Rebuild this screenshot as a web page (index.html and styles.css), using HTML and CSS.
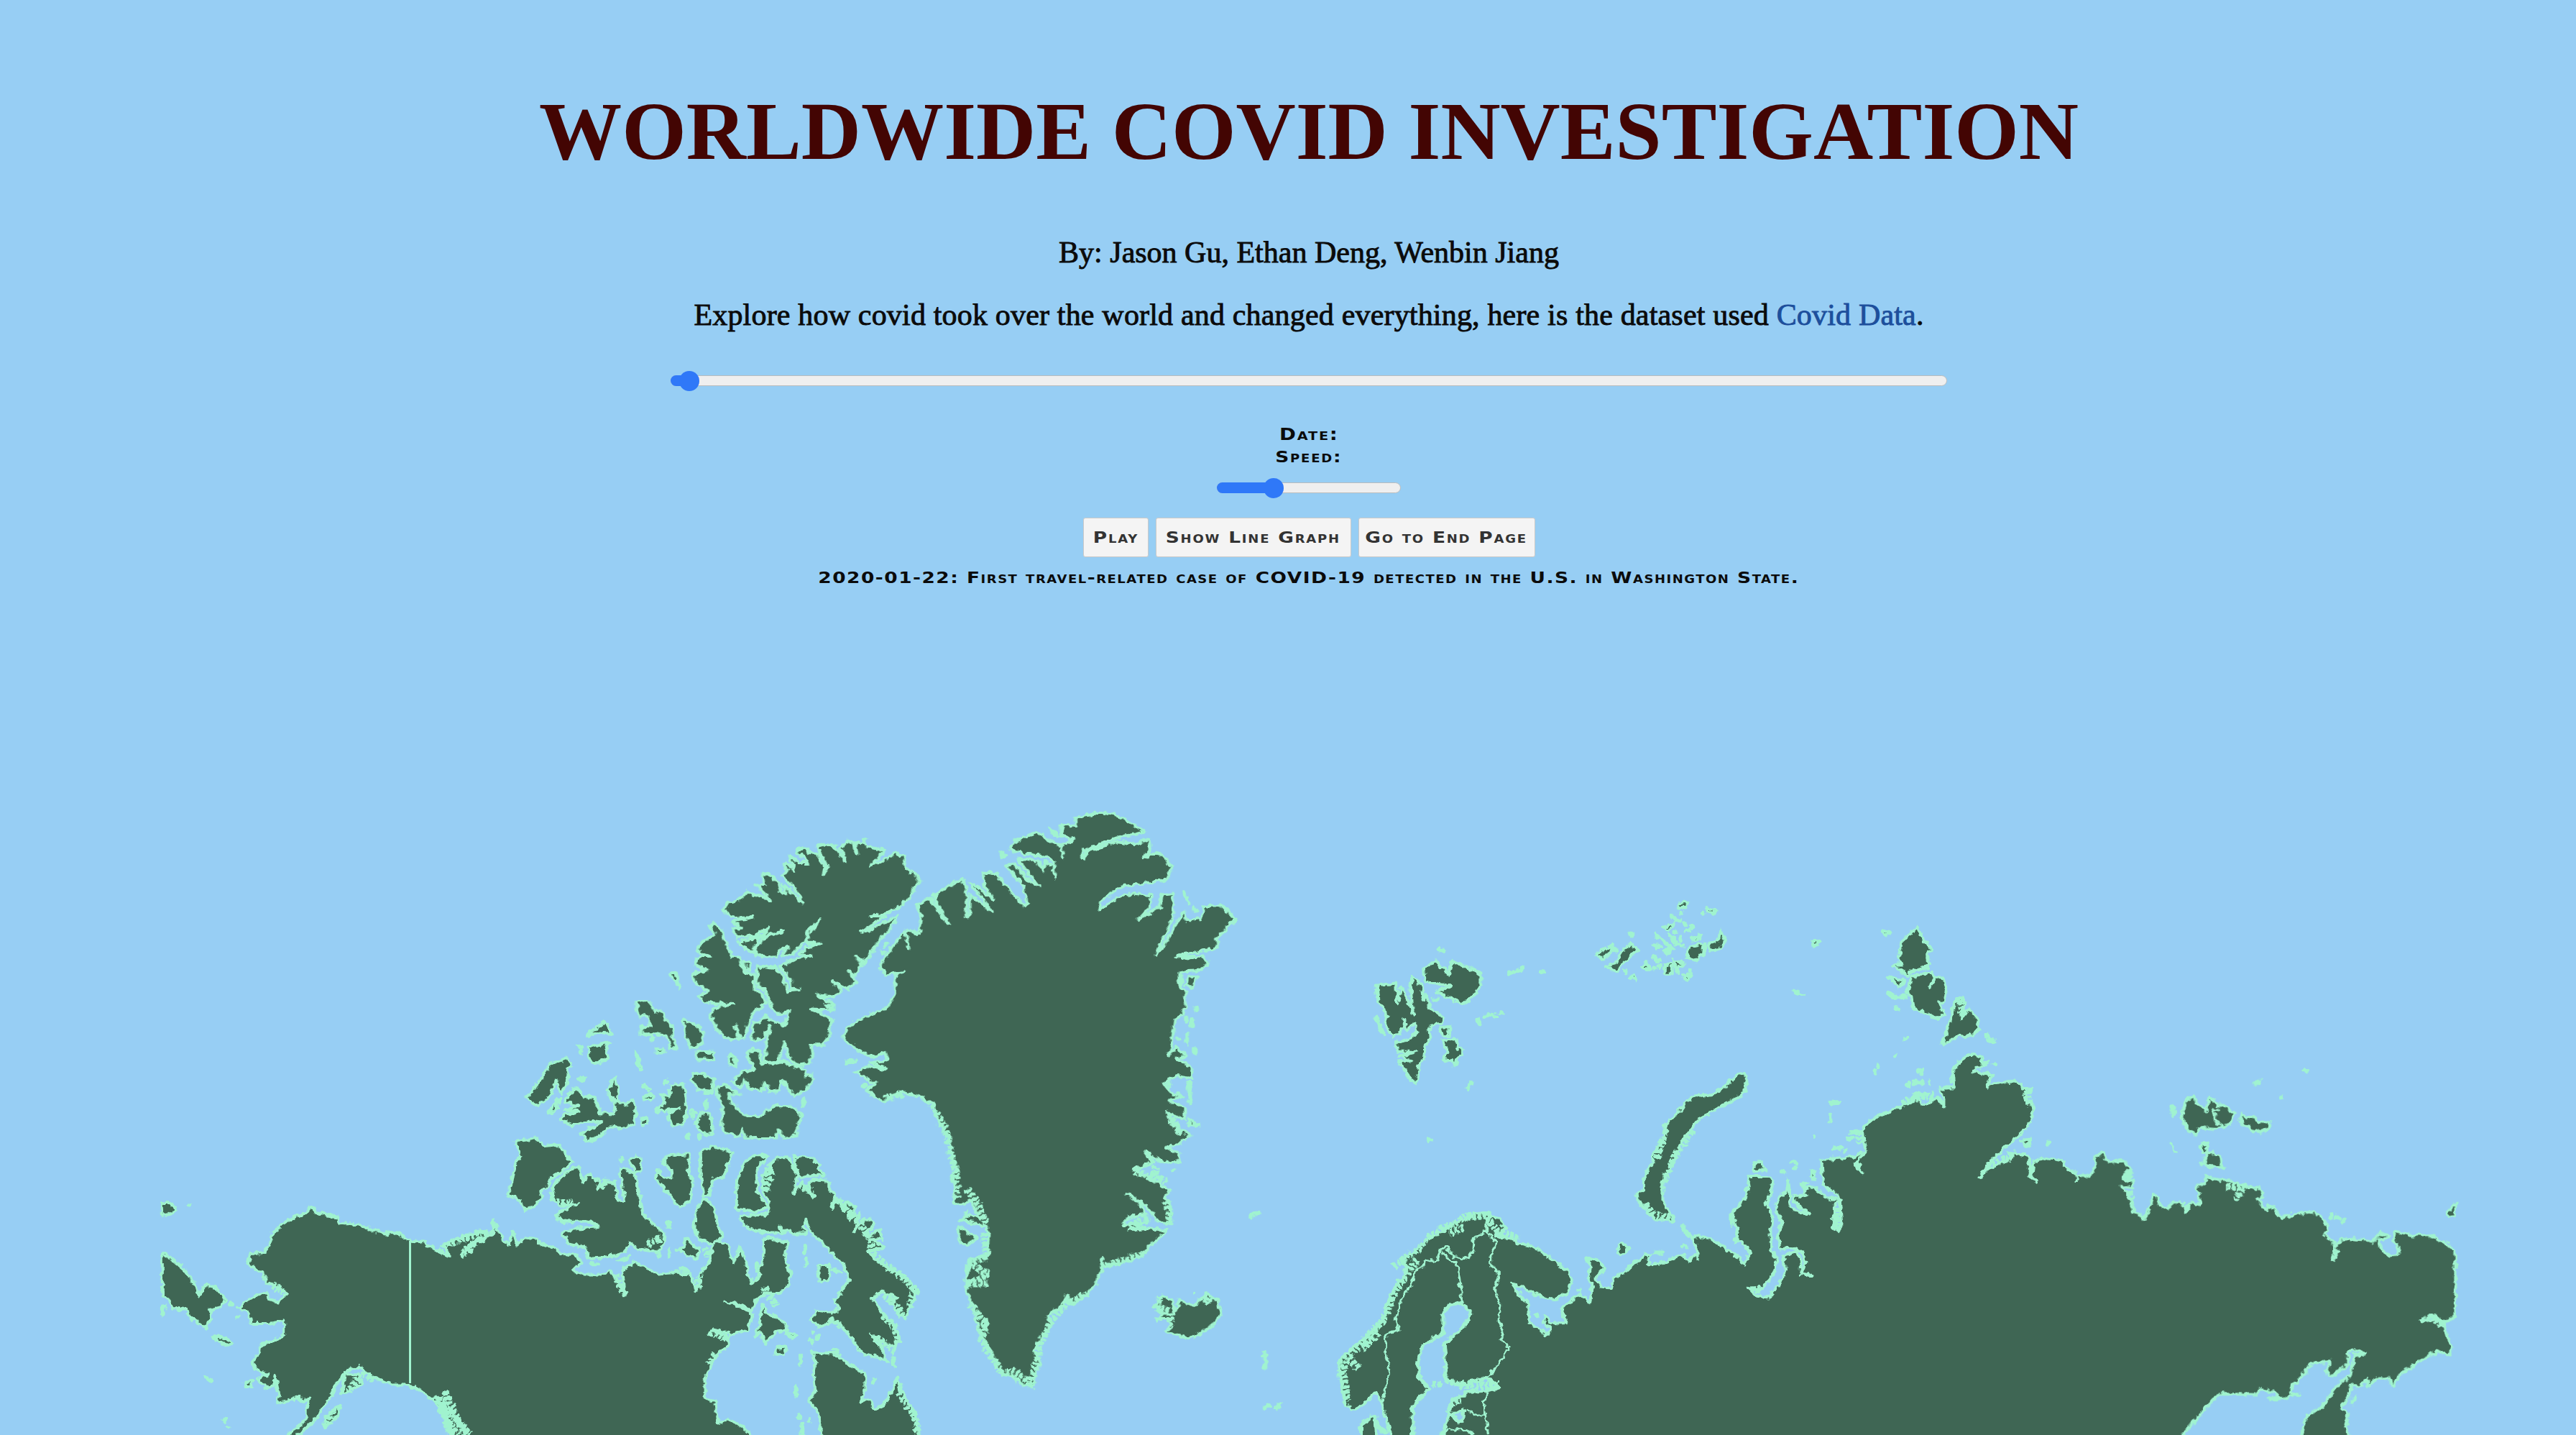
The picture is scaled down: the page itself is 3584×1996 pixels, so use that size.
FILE: index.html
```html
<!DOCTYPE html>
<html lang="en">
<head>
<meta charset="utf-8">
<title>Worldwide Covid Investigation</title>
<link rel="stylesheet" href="styles.css">
</head>
<body>
<header class="intro">
  <h1 class="title">WORLDWIDE COVID INVESTIGATION</h1>
  <p class="byline">By: Jason Gu, Ethan Deng, Wenbin Jiang</p>
  <p class="lead">Explore how covid took over the world and changed everything, here is the dataset used <a class="link" href="#">Covid Data</a>.</p>
</header>
<section class="controls">
  <div class="slider slider-date"><span class="fill"></span><span class="thumb"></span></div>
  <div class="label wide">Date:</div>
  <div class="label label-speed wide">Speed:</div>
  <div class="slider slider-speed"><span class="fill"></span><span class="thumb"></span></div>
  <div class="buttons">
    <button class="btn btn-play"><span class="wide">Play</span></button>
    <button class="btn btn-graph"><span class="wide">Show Line Graph</span></button>
    <button class="btn btn-end"><span class="wide">Go to End Page</span></button>
  </div>
  <p class="event wide">2020-01-22: First travel-related case of COVID-19 detected in the U.S. in Washington State.</p>
</section>
<main class="map-wrap">
<svg class="map" viewBox="225 1000 3192 996">
  <defs>
    <filter id="rough" filterUnits="userSpaceOnUse" x="200" y="1000" width="3250" height="1010" color-interpolation-filters="sRGB">
      <feTurbulence type="fractalNoise" baseFrequency="0.13" numOctaves="2" seed="4" result="n"/>
      <feDisplacementMap in="SourceGraphic" in2="n" scale="9" xChannelSelector="R" yChannelSelector="G"/>
    </filter>
  </defs>
  <g filter="url(#rough)">
  <!-- Alaska and western Canada -->
  <g class="land" transform="translate(200 1400) scale(.57398 .3801)">
    <path d="M345 1590 345 1568 375 1540 395 1505 395 1465 403 1430 385 1445 375 1430 350 1442 322 1450 328 1420 318 1355 315 1390 295 1395 275 1365 300 1345 272 1330 262 1300 278 1270 285 1235 315 1222 340 1208 340 1145 325 1155 300 1160 262 1160 250 1120 230 1100 265 1062 295 1045 300 1070 325 1080 350 1050 310 1015 297 1010 290 980 252 937 258 905 285 903 302 880 312 830 330 805 365 768 395 755 405 732 420 755 450 765 470 770 475 795 520 795 550 817 585 830 612 824 640 855 680 862 705 890 738 915 730 870 760 850 800 830 830 820 828 850 790 880 770 912 800 860 850 825 845 785 858 815 870 850 885 872 895 820 905 870 925 845 950 850 970 875 990 880 1020 905 1050 910 1060 935 1040 965 1060 980 1110 980 1130 965 1150 1010 1167 1058 1160 960 1190 935 1220 960 1250 980 1290 972 1325 980 1340 1040 1355 960 1370 940 1380 870 1390 855 1415 870 1430 940 1445 880 1460 935 1465 980 1475 1015 1490 990 1500 930 1505 845 1530 850 1560 865 1555 920 1568 980 1560 1025 1540 1050 1505 1050 1485 1075 1475 1112 1450 1095 1410 1082 1440 1090 1475 1125 1465 1180 1430 1200 1375 1180 1420 1220 1415 1245 1390 1270 1375 1310 1360 1370 1360 1435 1383 1445 1392 1525 1418 1512 1450 1535 1470 1568 1480 1600 755 1600 745 1568 720 1480 700 1440 665 1400 640 1385 600 1385 550 1350 520 1318 490 1335 465 1385 448 1440 410 1520 375 1568 365 1600Z"/>
    <path d="M45 900 60 915 100 965 125 1020 130 1060 150 1020 170 1025 200 1075 185 1100 160 1110 165 1140 150 1175 110 1135 105 1110 70 1105 55 1060 45 1060ZM45 1095 52 1095 45 1130ZM45 718 62 718 80 742 65 760 45 765ZM170 1205 200 1215 215 1235 205 1240 175 1222ZM245 1375 262 1370 262 1392 248 1392ZM485 1345 520 1345 530 1380 505 1400 480 1420ZM440 1500 475 1460 470 1500 440 1540Z"/>
    <path d="M900 495 948 482 975 510 1005 505 1040 570 985 635 978 665 968 665 960 715 922 750 912 710 882 688 893 640 900 580 912 545Z"/>
    <path d="M1055 582 1062 640 1080 612 1105 640 1100 670 1120 640 1143 648 1150 712 1165 712 1158 640 1155 590 1190 610 1200 680 1210 760 1230 790 1260 825 1262 870 1245 900 1195 885 1178 865 1165 900 1130 915 1078 925 1070 880 1030 870 1012 825 1050 812 1102 805 1085 785 1050 785 1010 790 998 760 1050 720 1010 730 988 705 992 660 1020 610Z"/>
    <path d="M1175 560 1195 548 1207 560 1205 600 1195 610ZM985 210 1025 190 1040 215 1025 225 1030 280 1010 318 1000 270 985 330 955 365 925 335 945 305ZM1075 105 1118 52 1135 100 1100 95ZM1078 150 1128 130 1120 150 1125 190 1095 208 1080 195ZM1050 140 1065 150 1062 170ZM1190 165 1210 230 1200 225ZM980 385 1008 335 995 388ZM1052 264 1070 262 1066 272Z"/>
    <path d="M1020 350 1040 300 1060 310 1065 330 1090 330 1108 390 1140 393 1143 350 1122 310 1142 262 1150 300 1148 345 1165 360 1185 345 1193 370 1188 430 1160 445 1130 440 1100 480 1075 490 1058 465 1110 425 1080 420 1040 435 1010 415 1020 395 1055 385 1020 378 1055 365Z"/>
    <path d="M1275 290 1310 285 1315 340 1315 400 1305 435 1280 435 1270 390 1300 372 1240 385 1262 350 1255 320 1275 330ZM1210 285 1230 305 1222 312ZM1212 325 1235 325 1230 340 1215 338ZM1205 410 1220 405 1220 430 1208 432ZM1330 245 1355 245 1382 265 1378 310 1345 305 1330 270ZM1355 385 1375 400 1380 465 1360 468 1335 430ZM1270 545 1322 540 1320 600 1332 640 1325 710 1300 738 1270 680 1240 630 1245 600 1262 630 1280 625 1278 595 1258 570ZM1350 530 1380 512 1428 532 1405 628 1380 630 1370 690 1358 690 1350 620ZM1360 700 1385 740 1390 800 1405 840 1380 870 1350 855 1335 820 1338 740ZM1480 545 1512 545 1485 600 1488 680 1512 735 1480 752 1437 740 1437 640 1455 570ZM1312 845 1345 890 1340 925 1290 890 1310 880ZM1150 930 1180 910 1165 930Z"/>
    <path class="fringe" d="M705 1425 725 1480 745 1568M730 1410 750 1480 780 1568M715 1430 740 1520 760 1568M725 1450 790 1568M530 1340 560 1370M520 1360 495 1410M455 1480 445 1530M340 1045 310 1015M720 900 735 870 820 825M775 905 800 865M1220 870 1255 850M1145 980 1160 1050M1000 715 1040 722M1105 660 1125 635M1370 1190 1420 1215M1385 1270 1370 1310M1500 1030 1530 1090M1345 1030 1345 990M1360 880 1370 920"/>
    <path class="specks" d="M108 730h2M212 1090h2M228 1136h2M150 1358l12 14M195 1515h2M203 1538h2M1272 785v20M1250 900v16M1273 890v24M1300 960l20 6M1085 940h14M1318 475v6M1347 475v5M1330 380v22M1362 350v14M1270 272l-8 12"/>
  </g>
  <!-- Ellesmere, Devon and the Queen Elizabeth Islands -->
  <g class="land" transform="translate(680 1130) scale(.40816 .33333)">
    <path d="M800 410 815 380 860 360 880 330 905 345 935 350 960 372 945 345 910 305 940 300 935 255 955 258 985 290 995 330 1015 340 1000 300 1040 340 1070 382 1060 345 1002 265 1020 240 1005 225 1015 210 1040 240 1025 180 1060 210 1090 210 1050 160 1070 150 1100 170 1120 170 1140 220 1158 225 1140 260 1150 215 1118 140 1150 132 1185 145 1200 180 1218 205 1200 150 1220 122 1240 122 1255 170 1250 130 1280 118 1290 145 1350 158 1305 220 1340 205 1385 165 1415 185 1420 235 1455 255 1468 285 1445 325 1430 360 1400 395 1350 425 1300 432 1350 432 1270 500 1300 490 1395 430 1385 460 1330 540 1280 630 1255 600 1270 640 1250 680 1225 660 1255 710 1225 735 1170 705 1205 740 1175 770 1120 760 1175 800 1175 825 1095 820 1130 835 1175 870 1160 895 1165 930 1140 970 1100 970 1105 1010 1090 1050 1050 1055 1020 1020 1010 960 985 1040 940 1045 945 980 958 890 930 950 895 950 900 885 945 852 1005 890 1025 830 985 840 965 815 955 780 940 740 917 728 915 680 915 640 980 648 1005 690 1020 745 1060 740 1030 735 1028 700 990 640 1050 610 1100 598 1060 590 1080 565 1135 545 1085 545 1085 510 1128 450 1090 490 1075 540 1040 590 1000 600 1018 560 985 580 980 600 940 605 905 590 930 530 1005 495 920 520 900 585 870 565 850 540 930 520 955 478 925 500 910 515 845 522 835 480 860 485 830 455 900 438 860 440 825 430Z"/>
    <path d="M750 475 765 462 795 490 805 535 828 598 855 605 862 640 872 668 905 680 905 740 935 765 948 795 905 830 885 880 870 945 858 945 840 890 850 945 800 938 775 900 752 838 780 812 832 798 740 795 715 770 745 742 702 712 697 672 745 660 700 632 722 600 755 600 710 578 725 540 772 510ZM870 625 888 625 888 660 875 655Z"/>
    <path d="M905 1072 880 1010 900 985 925 1000 930 1045 970 1050 1005 1035 1020 1050 1075 1070 1080 1100 1100 1090 1105 1120 1080 1160 1040 1185 1020 1155 1000 1115 990 1160 960 1165 940 1130 930 1165 900 1150 890 1160 870 1115 860 1150 830 1125 860 1085ZM775 1150 800 1132 855 1178 815 1175 830 1210 855 1250 880 1265 920 1270 970 1225 1020 1225 1055 1245 1070 1275 1052 1300 1050 1350 1010 1360 985 1325 980 1358 875 1360 865 1325 850 1355 800 1330 792 1280 800 1240 785 1190Z"/>
    <path d="M620 670 640 668 650 735 638 705 622 695ZM505 790 545 785 565 830 585 825 610 870 628 900 630 940 642 985 620 985 608 935 575 925 520 925 518 895 550 895 540 850 515 850 505 830ZM662 862 690 875 732 915 725 970 690 985 668 930ZM708 1000 768 998 765 1032 708 1030ZM815 1015 838 1020 845 1060 822 1055ZM570 988 590 985 598 1000 575 1003ZM1150 805 1172 805 1175 825Z"/>
    <path class="specks" d="M555 935v12M450 1448h3M740 1205v22M1072 1200v20M1352 555h2M690 1260l14-6M675 1355l6-6M718 1352h3M735 1170h22"/>
  </g>
  <!-- Baffin Island and northern Quebec -->
  <g class="land" transform="translate(960 1560) scale(.44643 .33333)">
    <path d="M325 145 385 155 400 180 418 228 380 222 345 235 328 190ZM245 180 285 148 308 148 320 190 335 215 325 300 350 250 385 320 370 260 385 240 425 245 435 260 435 290 455 300 440 360 460 320 480 370 490 335 515 355 495 410 530 385 510 460 545 405 570 410 572 435 540 480 590 455 597 490 560 490 605 525 555 540 580 580 620 610 660 640 710 705 700 740 685 775 670 820 640 790 620 750 645 735 600 710 565 735 600 800 635 850 655 915 635 940 600 920 565 890 600 950 615 1000 560 975 525 955 505 905 470 850 440 830 425 850 400 855 375 830 395 790 430 800 465 782 450 742 475 700 495 660 480 600 450 560 430 530 390 480 375 455 360 410 350 435 365 468 330 470 275 440 300 465 220 462 170 435 155 392 200 392 245 385 245 330 225 290 228 230 240 200 262 220Z"/>
    <path d="M400 600 435 600 435 660 400 665ZM225 760 240 800 290 830 305 870 265 880 235 925 220 880 200 895 215 860ZM300 880 330 890 318 905ZM270 945 300 940 290 975 265 970ZM345 970 350 1000 340 1015ZM370 908 385 918 380 928ZM570 1075 576 1075 572 1090ZM445 615 470 625 450 628ZM630 1000 640 1025 632 1015Z"/>
    <path d="M380 960 460 970 490 1010 545 1050 545 1130 530 1170 560 1160 575 1200 610 1175 625 1130 645 1070 660 1130 700 1215 715 1308 720 1340 410 1340 408 1308 405 1225 370 1165 390 1120 385 1050 390 1010Z"/>
    <path class="specks" d="M362 575v20M358 520v25M383 878h2M398 900v8M330 1110l-4 35M343 1230v6M372 1242v6M350 1265v40M635 985v20M450 950l8 8M208 595v30"/>
    <path class="fringe" d="M450 315 490 370 530 420 560 490 570 550 620 610 660 645 700 700 685 770M605 725 645 770 660 810M580 900 640 960M600 810 640 860 645 930M435 825 470 850M340 260 375 290M240 190 245 240 235 290M650 1130 700 1230 712 1300M235 690 270 770"/>
  </g>
  <!-- Greenland and Iceland -->
  <g class="land" transform="translate(1160 1100) scale(.39541 .54847)">
    <path d="M35 630 45 600 120 570 190 548 215 515 215 470 240 458 185 468 160 445 175 430 205 395 250 355 265 400 252 355 265 352 300 365 308 325 295 290 340 270 380 318 405 338 350 265 400 245 450 222 468 250 468 320 480 315 480 265 555 305 480 235 500 240 562 275 530 240 525 205 575 212 610 245 670 292 680 285 665 240 605 190 635 185 690 230 720 240 690 215 645 172 720 178 738 205 740 178 775 190 778 220 775 180 750 168 640 155 620 145 640 125 715 105 770 130 800 140 805 170 800 138 845 125 800 115 803 85 850 90 850 68 940 55 1000 62 1095 102 985 122 875 152 875 172 890 154 1000 128 1060 135 1110 122 1112 155 1090 168 1130 158 1150 160 1192 192 1170 225 1000 245 935 285 940 302 1000 270 1050 260 1120 265 1115 292 1072 325 1148 292 1152 265 1195 258 1195 320 1135 415 1160 395 1232 305 1240 330 1290 325 1305 292 1365 290 1413 325 1345 375 1350 398 1285 408 1205 420 1230 422 1300 420 1315 435 1290 455 1215 460 1215 495 1235 505 1240 545 1225 570 1200 580 1190 640 1180 670 1205 650 1240 672 1205 680 1258 700 1258 728 1210 722 1160 740 1185 765 1225 775 1180 785 1235 805 1235 835 1170 815 1215 860 1255 870 1215 895 1170 905 1215 920 1212 942 1180 945 1125 930 1095 915 1125 945 1050 960 1120 985 1185 1015 1165 1030 1185 1055 1187 1100 1135 1090 1110 1060 1030 1020 1080 1050 1100 1075 1040 1080 1015 1100 1100 1095 1035 1115 1100 1108 1175 1115 1110 1155 1085 1180 1000 1200 955 1208 940 1185 945 1215 920 1250 895 1275 840 1305 820 1280 800 1310 750 1330 765 1355 740 1380 705 1420 725 1445 710 1480 705 1510 670 1510 630 1485 595 1480 550 1420 515 1380 500 1345 495 1310 470 1280 465 1240 475 1190 510 1185 540 1180 545 1120 540 1105 445 1088 480 1075 515 1085 480 1040 440 1050 420 1040 425 1010 415 980 430 960 415 920 405 880 385 860 362 830 355 800 300 775 245 765 200 775 180 790 115 760 145 742 75 712 120 700 188 706 130 690 188 682 180 665 130 675 80 655Z"/>
    <path d="M440 1105 505 1135 470 1155 440 1140ZM1125 1310 1155 1280 1190 1290 1200 1325 1215 1292 1270 1305 1310 1275 1350 1290 1365 1325 1330 1360 1250 1390 1165 1372 1190 1355 1170 1340 1135 1340 1165 1325ZM588 155 605 165 590 168ZM1232 255 1250 285 1238 275ZM1265 295 1280 305 1272 306ZM1245 470 1280 470 1262 500 1240 492ZM1250 830 1272 845 1250 850ZM760 95 790 115 770 108ZM1305 1287 1330 1290 1310 1300Z"/>
    <path class="specks" d="M1275 550v6M1262 580l-4 18M1240 575v8M1242 615v25M1270 655v10M1210 628h2M1250 740l4 50M1192 962h2M1280 848h3M170 410h5M183 392h2M45 688l30-2M105 748h8M1467 1080l26-12M1510 1435l16 0M1518 1425v38M1268 1272h1M1512 1566l18-6M1555 1566l12-8M465 1068v4M1222 470v20M1215 850v15"/>
    <path class="fringe" d="M345 795 370 830 400 870 412 920 430 970 435 1030M470 1010 510 1050 535 1100M530 1120 540 1180 480 1200 540 1225 480 1250 540 1250M480 1300 510 1330 540 1360 520 1390 550 1430 590 1475 640 1475 690 1500 715 1450 720 1410 760 1350 820 1300 890 1275M960 1203 1090 1175M1150 1280 1140 1310 1180 1320 1190 1350M1175 1040 1180 1095M180 780 250 768M510 1370 540 1345M1060 965 1170 990M1120 940 1140 990M1040 1100 1110 1085M1180 820 1220 870M1170 740h20"/>
  </g>
  <!-- Scandinavia, Svalbard, Novaya Zemlya, western Russia -->
  <g class="land" transform="translate(1840 1240) scale(.40816 .48214)">
    <path d="M1278 1040 1250 1068 1230 1045 1190 1060 1145 1075 1110 1075 1115 1045 1070 1065 1020 1105 990 1115 985 1145 950 1140 930 1115 962 1090 945 1065 895 1058 915 1075 908 1120 920 1130 912 1185 880 1160 840 1185 815 1205 832 1245 780 1245 760 1225 750 1240 780 1265 765 1278 705 1245 700 1185 670 1165 645 1130 690 1145 740 1168 790 1178 830 1160 850 1130 840 1100 790 1065 720 1025 670 1015 640 1000 590 995 625 970 600 945 560 930 520 930 490 945 440 960 400 985 350 1010 310 1040 270 1060 290 1090 250 1140 220 1190 210 1230 160 1280 110 1310 60 1350 55 1390 70 1440 75 1475 105 1495 140 1480 180 1445 200 1470 215 1520 232 1568 232 1595 1278 1595Z"/>
    <path d="M130 1590 130 1540 165 1515 180 1515 185 1590Z"/>
    <path d="M185 270 250 265 255 320 268 270 290 310 310 355 298 265 308 245 340 270 345 315 355 295 362 330 415 365 410 378 385 382 362 400 365 430 350 445 345 480 330 500 318 555 300 540 258 490 305 488 262 475 320 462 255 462 252 435 300 425 325 405 315 380 285 400 280 370 265 410 240 420 210 380 220 360 205 330 190 320ZM350 260 345 220 388 200 430 240 440 200 480 215 540 235 540 265 515 305 475 325 445 310 385 290 435 272ZM410 430 455 425 460 450 480 455 450 502 440 488 408 485 425 460ZM400 392 432 390 432 415 410 415ZM183 360 212 415 195 395ZM1005 1020 1020 1012 1045 1030 1015 1052ZM345 1515 358 1505 355 1528ZM1225 963 1262 1000 1240 990Z"/>
    <path d="M1440 530 1447 550 1440 580 1380 612 1285 655 1255 690 1225 720 1190 790 1160 840 1160 890 1200 950 1130 945 1100 915 1075 895 1072 870 1095 860 1095 825 1130 780 1120 765 1160 720 1170 670 1210 640 1240 605 1285 585 1320 590 1385 555 1390 545 1425 525Z"/>
    <path class="specks" d="M637 237l44-14M748 231h3M557 360l20-6 18 6M608 349h2M528 370l8 12M508 550l-14 18M365 714l2 2M398 168l15 4M380 312h14M875 1150h3M1228 1022l8 4M1130 1042h28M728 1222h6M1395 930v30M378 1415l28 4M540 1424h3M185 1530l10 20 20 10M370 1484h2"/>
    <path class="water" d="M430 1195 475 1187 503 1210 500 1232 470 1265 415 1305 420 1360 418 1400 460 1425 560 1405 605 1430 560 1440 500 1442 440 1470 430 1500 465 1530 480 1520 482 1498 430 1510 412 1560 410 1595 300 1595 310 1555 305 1490 362 1435 330 1400 325 1360 340 1310 410 1275 412 1220Z"/>
    <path class="fringe" d="M575 935 500 935 440 960 370 990 330 1030 285 1055 240 1085M320 1060 285 1105 250 1150 225 1200 205 1240 150 1290 80 1345 70 1390 80 1440 85 1470M480 970 430 985M90 1345 120 1375M560 940 600 980 670 1005M190 1275 140 1320M420 1410 470 1425 600 1425M375 1420h30M1100 905 1130 930 1200 945M1170 690 1140 770M1260 690 1190 780 1165 840M435 1475 475 1465"/>
    <path class="border" d="M205 1465 225 1400 230 1375 215 1340 215 1280 260 1265 250 1240 268 1175 305 1130 320 1085 345 1085 350 1062 390 1068 400 1035 418 1022 450 1055 495 1058 512 1035 515 1000 560 982 590 1010 575 1050 575 1078 605 1105 585 1140 607 1195 600 1240 615 1265 607 1285 638 1315 600 1365 555 1405M405 1040 460 1080 472 1145 475 1187M560 982 562 940M565 1445 550 1470 555 1510 565 1570M490 1495 530 1512 555 1512M410 1555 490 1552 520 1568"/>
  </g>
  <!-- Siberia and the Arctic archipelagos -->
  <g class="land" transform="translate(2200 1240) scale(.44643 .38265)">
    <path d="M362 1310 350 1265 360 1252 400 1260 440 1290 485 1325 507 1358 525 1312 500 1275 480 1275 487 1220 470 1190 480 1155 510 1120 525 1035 585 1035 597 1050 590 1110 575 1135 597 1170 590 1230 592 1310 610 1335 600 1390 575 1430 560 1450 520 1442 545 1470 585 1475 615 1430 635 1390 630 1325 670 1310 685 1340 685 1390 720 1397 690 1385 700 1350 690 1310 655 1295 620 1300 612 1250 625 1200 605 1150 615 1110 640 1095 645 1045 650 1100 648 1150 715 1175 665 1130 662 1105 700 1105 695 1080 725 1075 770 1115 808 1120 790 1140 785 1220 798 1235 812 1210 805 1110 755 1065 748 975 840 965 885 950 855 990 875 1025 860 985 888 945 880 910 875 870 890 845 925 815 1000 780 1050 750 1060 775 1110 750 1130 780 1130 745 1115 715 1160 715 1155 665 1175 620 1215 588 1250 605 1245 635 1220 655 1280 665 1265 710 1295 695 1350 688 1385 715 1390 760 1408 775 1405 830 1380 870 1345 905 1310 945 1280 975 1240 1040 1265 1010 1350 965 1330 945 1390 960 1400 1000 1398 1045 1418 1055 1405 1040 1410 980 1440 968 1505 978 1505 1000 1545 1030 1545 2020 362 2020Z"/>
    <path d="M1048 130 1065 175 1092 210 1080 225 1082 275 1030 292 1015 305 990 285 970 265 1000 265 990 240 998 185 1020 160ZM1028 310 1090 292 1100 315 1085 350 1105 310 1125 312 1138 355 1130 400 1118 405 1132 450 1105 462 1080 445 1035 425 1028 380 1015 365ZM958 308 1008 325 990 350ZM1185 390 1195 405 1185 460 1208 425 1235 465 1240 500 1225 520 1165 530 1125 558 1140 500 1150 465 1165 400ZM938 142 965 150 955 160 940 155ZM720 180 745 180 738 192 722 198ZM662 358 690 376 676 376Z"/>
    <path d="M300 43 330 38 326 58 302 62ZM388 60 418 66 416 78 398 76ZM435 143 450 175 435 207 403 214 393 195 425 182ZM332 203 384 190 381 227 362 252 331 241ZM344 173 374 155 361 181ZM260 268 284 263 284 300 259 300ZM286 248 322 262 303 275 300 298ZM188 275 203 258 214 284ZM250 172 292 208 275 206ZM273 157 310 196 298 196ZM282 88 310 106 292 108ZM43 227 98 195 90 225 70 244ZM76 272 108 262 116 240 130 215 155 190 177 213 150 238 130 262 108 292ZM225 194 247 200 232 206ZM253 215 278 211 268 225ZM318 303 340 303 330 322ZM148 315 163 304 172 322ZM232 155 248 170 236 168ZM256 130 288 118 277 141ZM540 983 562 983 572 1014 538 1017ZM685 1065 705 1060 690 1075ZM722 1015 730 1042 715 1040ZM1370 905 1400 900 1390 928ZM1048 655 1065 645 1060 660ZM785 1180 800 1185 795 1220ZM622 1018 634 1018 630 1024Z"/>
    <path class="specks" d="M155 150v8M310 78h2M378 80h4M340 128h8M318 118h4M328 142h8M225 238l16 14M225 278h3M243 272h3M310 165v8M312 195h4M140 288v6M100 205l10 10M340 290h2M955 368l20 16 35-4M980 424l10 6M1010 536h3M976 597h2M926 636v4M915 655h3M1015 703h5M1035 694h30M1085 688v12M1262 520v6M1268 538l18 4M1265 620l-12 10M1285 628h3M772 768l30-2M778 812v22M726 888v3M788 932h20M822 940h3M832 900l14-4M845 875h10M655 985l15 2M665 1005h5M1452 912h2M320 1290h3M295 145v4M320 320h4M1398 720v6M1030 750l20-12 25 0"/>
    <path class="fringe" d="M860 870 870 915M1000 770 1050 745 1100 740M1380 710 1400 780M530 1445 560 1450M1265 1000 1350 960M795 1150 795 1230M1180 380 1185 440"/>
  </g>
  <g class="land" transform="translate(2800 1400) scale(.40816 .3801)">
    <path d="M220 615 265 622 283 590 280 550 303 535 330 570 380 565 410 600 375 630 410 640 410 665 372 655 400 700 415 750 448 778 465 745 480 690 495 695 500 725 525 738 550 715 575 718 595 750 605 720 640 725 635 680 622 660 665 640 655 618 680 630 740 638 800 660 840 665 858 695 835 705 865 745 870 725 895 740 905 765 925 772 975 757 1020 752 1060 775 1075 805 1065 835 1085 855 1095 865 1108 900 1092 928 1100 880 1120 852 1160 850 1225 862 1252 828 1280 840 1270 855 1248 850 1255 885 1285 912 1312 910 1318 890 1300 850 1303 820 1365 838 1420 838 1475 865 1510 898 1510 1130 1480 1155 1430 1130 1390 1152 1440 1145 1470 1160 1485 1215 1500 1250 1490 1275 1450 1260 1400 1290 1350 1325 1310 1360 1300 1390 1280 1360 1240 1362 1210 1392 1212 1365 1180 1390 1155 1385 1145 1430 1120 1470 1145 1490 1135 1540 1145 1568 1145 1600 980 1600 985 1568 990 1530 1010 1490 1045 1475 1110 1385 1155 1345 1165 1275 1200 1270 1170 1258 1145 1265 1145 1310 1085 1355 1070 1330 1085 1300 1020 1305 990 1350 955 1385 950 1415 975 1420 920 1435 890 1410 845 1400 830 1420 710 1418 685 1435 655 1475 580 1568 560 1600 220 1600Z"/>
    <path d="M575 400 590 350 615 325 635 360 660 380 668 330 700 362 720 362 755 390 740 430 695 450 635 445 622 468 598 455ZM780 390 795 405 822 402 835 418 878 425 870 450 845 460 815 450 775 420ZM665 540 682 534 705 550 718 590 680 585 640 575 655 568ZM646 503 664 503 662 532 646 532ZM1508 720 1508 768 1484 772 1482 750ZM545 360 552 385 545 402ZM540 505 560 535ZM826 284 845 270 840 284ZM875 1435 900 1430 912 1438ZM1155 1440 1175 1430 1155 1455Z"/>
    <path class="border" d="M705 375 685 378 695 425 725 438M1450 1150l20 25"/>
    <path class="specks" d="M1000 235h2M917 330h2M120 496v4M1087 766v4M1107 772h4M1125 783h5M303 536h2"/>
    <path class="fringe" d="M390 600 405 640M395 680 410 710M730 660 790 660 760 705M575 720 600 740M1430 1135 1460 1165"/>
  </g>
  <path class="patch" d="M2355 1753h13v260h-13zM2883 1644h13v370h-13z"/>
  </g>
  <path class="border" d="M570.5 1726V1924"/>
</svg>
</main>
</body>
</html>
```
FILE: styles.css
```css
body {
  margin: 0;
  width: 3584px;
  height: 1996px;
  box-sizing: border-box;
  padding-left: 58px;
  overflow: hidden;
  background: #97cef4;
  color: #0b0b0b;
  text-align: center;
}
.intro { height: 515px; overflow: visible; }
.title {
  margin: 0;
  padding-top: 116px;
  font: bold 115.2px/132px "Liberation Serif", serif;
  color: #430503;
}
.byline, .lead {
  margin: 0;
  font-family: Luminari, "Liberation Serif", serif;
  font-size: 42px;
  line-height: 48px;
  white-space: nowrap;
  -webkit-text-stroke: 0.9px currentColor;
}
.byline { padding-top: 79px; letter-spacing: 0; }
.lead { padding-top: 39px; letter-spacing: 0.18px; }
.link { color: #1d4f9c; text-decoration: none; }
.controls {
  display: flex;
  flex-direction: column;
  align-items: center;
  height: 485px;
  font: bold 22px/31px Copperplate, "DejaVu Sans", sans-serif;
  font-variant: small-caps;
}
.wide {
  display: inline-block;
  transform: scaleX(1.2);
  letter-spacing: 1.5px;
  white-space: nowrap;
}
.slider {
  display: flex;
  align-items: center;
  height: 29px;
  position: relative;
}
.slider::before {
  content: "";
  position: absolute;
  inset: 7px 0;
  border-radius: 8px;
  box-sizing: border-box;
  border: 1.5px solid #b9bcbe;
  background: #efefef;
}
.slider-date { width: 1776px; }
.slider-speed { width: 256px; margin-top: 12px; }
.fill {
  height: 15px;
  border-radius: 8px;
  background: #2f78f8;
  position: relative;
}
.slider-date .fill { width: 26px; }
.slider-speed .fill { width: 79px; }
.thumb {
  width: 28px;
  height: 28px;
  margin-left: -14px;
  border-radius: 50%;
  background: #2f78f8;
  position: relative;
}
.label { margin-top: 45px; height: 31px; font-size: 23px; }
.label-speed { margin-top: 0; margin-bottom: 1px; font-size: 22px; }
.buttons { display: flex; gap: 10px; margin-top: 27px; }
.btn {
  height: 55px;
  padding: 0;
  display: flex;
  align-items: center;
  justify-content: center;
  border: 1.5px solid #c9c9c9;
  border-radius: 3px;
  background: #f4f4f4;
  color: #333;
  font: inherit;
  font-variant: small-caps;
}
.btn-play { width: 91px; }
.btn-graph { width: 272px; }
.btn-end { width: 246px; }
.event { margin: 13px 0 0; letter-spacing: 1.26px; }
.map-wrap { width: 3192px; height: 996px; margin: 0 auto; }
.map { display: block; width: 3192px; height: 996px; overflow: visible; }
.map path { vector-effect: non-scaling-stroke; }
.land path { fill: #3f6654; stroke: #a0f3cf; stroke-width: 4px; stroke-linejoin: round; }
.land .water { fill: #97cef4; stroke-width: 5px; }
.land .specks { fill: none; stroke-width: 6px; stroke-linecap: round; }
.land .fringe { fill: none; stroke-width: 10px; stroke-dasharray: 5 2; }
.land .border, .border { fill: none; stroke: #a0f3cf; stroke-width: 3px; }
.patch { fill: #3f6654; }
```
